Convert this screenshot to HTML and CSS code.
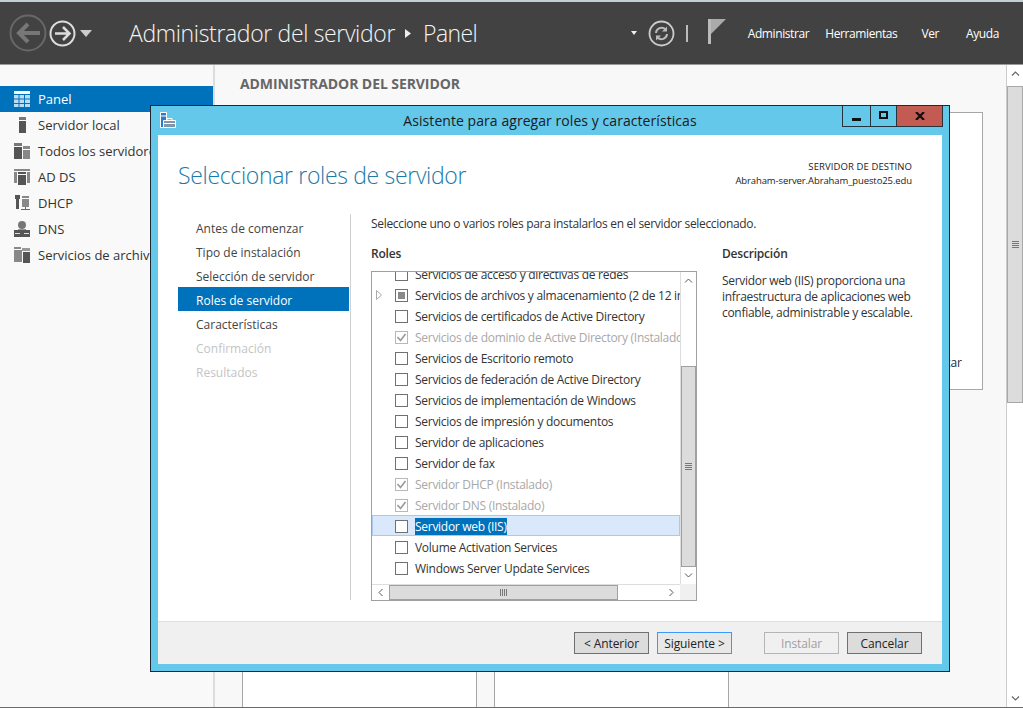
FILE: index.html
```html
<!DOCTYPE html>
<html lang="es">
<head>
<meta charset="utf-8">
<title>Administrador del servidor</title>
<link rel="stylesheet" href="styles.css">
</head>
<body>
<div class="app">
  <header class="topbar">
    <div class="nav">
      <svg class="back" width="38" height="38" viewBox="0 0 38 38"><circle cx="19" cy="19" r="17.500" fill="none" stroke="#686868" stroke-width="2"/><path d="M31 19H10M19 10l-9 9 9 9" fill="none" stroke="#777" stroke-width="4"/></svg>
      <svg class="forward" width="27" height="27" viewBox="0 0 27 27"><circle cx="13.500" cy="13.500" r="12" fill="none" stroke="#ddd" stroke-width="2"/><path d="M6 13.500h14M14 7l6.500 6.500L14 20" fill="none" stroke="#ddd" stroke-width="2.500"/></svg>
      <svg class="caret" width="12" height="7" viewBox="0 0 12 7"><path d="M0 0h12L6 7z" fill="#ccc"/></svg>
    </div>
    <div class="crumb"><span>Administrador del servidor</span><svg width="6" height="9" viewBox="0 0 6 9"><path d="M0 0l6 4.500L0 9z" fill="#eee"/></svg><span>Panel</span></div>
    <div class="tools">
      <svg class="mini" width="6" height="4" viewBox="0 0 6 4"><path d="M0 0h6L3 4z" fill="#eee"/></svg>
      <svg class="refresh" width="27" height="27" viewBox="0 0 27 27"><circle cx="13.500" cy="13.500" r="12" fill="none" stroke="#ccc" stroke-width="1.800"/><path d="M8 13a5.500 5.500 0 0 1 9.500-3.500M19 14a5.500 5.500 0 0 1-9.500 3.500" fill="none" stroke="#bbb" stroke-width="2"/><path d="M19 6.500v5h-5zM8 20.500v-5h5z" fill="#bbb"/></svg>
      <i class="sep"></i>
      <svg class="flag" width="18" height="25" viewBox="0 0 18 25"><path d="M0 0h3v25H0z" fill="#bbb"/><path d="M3 0h15L3 15z" fill="#aaa"/></svg>
      <nav class="menu"><span class="m1">Administrar</span><span class="m2">Herramientas</span><span class="m3">Ver</span><span class="m4">Ayuda</span></nav>
    </div>
  </header>
  <div class="workspace">
    <aside class="sidebar">
      <div class="item active"><svg class="ic" width="16" height="16" viewBox="0 0 16 16"><path d="M0 0h16v3H0z" fill="#fff"/><path d="M0 4h4.500v3.500H0zM5.500 4H10v3.500H5.500zM11 4h5v3.500h-5zM0 8.500h4.500V12H0zM5.500 8.500H10V12H5.500zM11 8.500h5V12h-5zM0 13h4.500v3H0zM5.500 13H10v3H5.500zM11 13h5v3h-5z" fill="#bcdcf2"/></svg>Panel</div>
      <div class="item"><svg class="ic" width="16" height="16" viewBox="0 0 16 16"><path d="M5 0h7v3H5z" fill="#777"/><path d="M5 4h7v12H5z" fill="#555"/></svg>Servidor local</div>
      <div class="item"><svg class="ic" width="16" height="16" viewBox="0 0 16 16"><path d="M0 0h8v3H0z" fill="#777"/><path d="M0 4h8v12H0z" fill="#555"/><path d="M9 3h7v3H9zM9 7h7v9H9z" fill="#888"/></svg>Todos los servidores</div>
      <div class="item"><svg class="ic" width="16" height="16" viewBox="0 0 16 16"><path d="M0 0h16v2H0zM0 3h3v11H0zM13 3h3v11h-3z" fill="#888"/><path d="M4 3h8v2H4zM4 6h8v10H4z" fill="#555"/></svg>AD DS</div>
      <div class="item"><svg class="ic" width="16" height="16" viewBox="0 0 16 16"><path d="M1 0h5v4H5v10H2V4H1z" fill="#555"/><path d="M8 1h7v2H8zM8 4h7v8H8z" fill="#888"/><path d="M11 12h1v2h4v1H7v-1h4z" fill="#666"/></svg>DHCP</div>
      <div class="item"><svg class="ic" width="16" height="16" viewBox="0 0 16 16"><circle cx="8" cy="4" r="4" fill="#777"/><path d="M4 8h8v1H4z" fill="#999"/><path d="M0 9h16v7H0z" fill="#555"/><path d="M1 12h5v1H1zM10 12h5v1h-5z" fill="#ddd"/></svg>DNS</div>
      <div class="item"><svg class="ic" width="16" height="16" viewBox="0 0 16 16"><path d="M0 0h7v2H0zM0 3h8v12H0z" fill="#888"/><path d="M8 1h8v3H8z" fill="#999"/><path d="M9 5h7v11H9z" fill="#555"/></svg>Servicios de archivos</div>
    </aside>
    <main class="content">
      <h2 class="page-title">ADMINISTRADOR DEL SERVIDOR</h2>
      <div class="tile"><span class="tile-text">Ocultar</span></div>
      <div class="lower"><div class="lower-box"></div><div class="lower-box"></div></div>
    </main>
    <div class="page-scroll">
      <div class="sb-btn"><svg width="9" height="5" viewBox="0 0 9 5"><path d="M1 4.500l3.500-3.500 3.500 3.500" fill="none" stroke="#666" stroke-width="1.200"/></svg></div>
      <div class="page-thumb"><i class="grip"></i></div>
      <div class="page-track"></div>
      <div class="sb-btn"><svg width="9" height="5" viewBox="0 0 9 5"><path d="M1 .500L4.500 4 8 .500" fill="none" stroke="#666" stroke-width="1.200"/></svg></div>
    </div>
  </div>
</div>

<section class="wizard">
  <div class="titlebar">
    <svg class="w-ic" width="16" height="16" viewBox="0 0 16 16"><path d="M.5.500h6v15h-6z" fill="#2a7cc7" stroke="#fff"/><path d="M1 4h5" stroke="#fff"/><path d="M3.500 8.500h12v7h-12z" fill="#7d97ad" stroke="#fff"/><path d="M7 8V6.500h5V8M4 11.500h11" fill="none" stroke="#fff"/></svg>
    <div class="w-title">Asistente para agregar roles y características</div>
    <div class="w-controls">
      <button class="wb wb-min"><i></i></button>
      <button class="wb wb-max"><i></i></button>
      <button class="wb wb-close"><svg width="10" height="8" viewBox="0 0 10 8"><path d="M1 0l4 4 4-4M1 8l4-4 4 4" fill="none" stroke="#111" stroke-width="2.200"/></svg></button>
    </div>
  </div>
  <div class="w-body">
    <div class="w-head">
      <h1>Seleccionar roles de servidor</h1>
      <div class="dest"><div class="dest-a">SERVIDOR DE DESTINO</div><div class="dest-b">Abraham-server.Abraham_puesto25.edu</div></div>
    </div>
    <div class="w-main">
      <ul class="steps">
        <li>Antes de comenzar</li>
        <li>Tipo de instalación</li>
        <li>Selección de servidor</li>
        <li class="cur">Roles de servidor</li>
        <li>Características</li>
        <li class="off">Confirmación</li>
        <li class="off">Resultados</li>
      </ul>
      <div class="pane">
        <p class="lead">Seleccione uno o varios roles para instalarlos en el servidor seleccionado.</p>
        <div class="cols">
          <div class="roles">
            <h3>Roles</h3>
            <div class="listbox">
              <div class="rows">
                <div class="row"><b class="cb"></b><span>Servicios de acceso y directivas de redes</span></div>
                <div class="row"><svg class="exp" width="6" height="10" viewBox="0 0 6 10"><path d="M.5.500l5 4.500-5 4.500z" fill="none" stroke="#aaa"/></svg><b class="cb part"></b><span>Servicios de archivos y almacenamiento (2 de 12 instalados)</span></div>
                <div class="row"><b class="cb"></b><span>Servicios de certificados de Active Directory</span></div>
                <div class="row dis"><b class="cb"><svg width="11" height="9" viewBox="0 0 11 9"><path d="M1.500 4l3 3.500 5-6.500" fill="none" stroke="#999" stroke-width="1.600"/></svg></b><span>Servicios de dominio de Active Directory (Instalado)</span></div>
                <div class="row"><b class="cb"></b><span>Servicios de Escritorio remoto</span></div>
                <div class="row"><b class="cb"></b><span>Servicios de federación de Active Directory</span></div>
                <div class="row"><b class="cb"></b><span>Servicios de implementación de Windows</span></div>
                <div class="row"><b class="cb"></b><span>Servicios de impresión y documentos</span></div>
                <div class="row"><b class="cb"></b><span>Servidor de aplicaciones</span></div>
                <div class="row"><b class="cb"></b><span>Servidor de fax</span></div>
                <div class="row dis"><b class="cb"><svg width="11" height="9" viewBox="0 0 11 9"><path d="M1.500 4l3 3.500 5-6.500" fill="none" stroke="#999" stroke-width="1.600"/></svg></b><span>Servidor DHCP (Instalado)</span></div>
                <div class="row dis"><b class="cb"><svg width="11" height="9" viewBox="0 0 11 9"><path d="M1.500 4l3 3.500 5-6.500" fill="none" stroke="#999" stroke-width="1.600"/></svg></b><span>Servidor DNS (Instalado)</span></div>
                <div class="row sel"><b class="cb"></b><span>Servidor web (IIS)</span></div>
                <div class="row"><b class="cb"></b><span>Volume Activation Services</span></div>
                <div class="row"><b class="cb"></b><span>Windows Server Update Services</span></div>
              </div>
              <div class="vbar">
                <div class="lb-btn"><svg width="9" height="5" viewBox="0 0 9 5"><path d="M1 4.500l3.500-3.500 3.500 3.500" fill="none" stroke="#555"/></svg></div>
                <div class="v-track"></div>
                <div class="v-thumb"><i class="grip"></i></div>
                <div class="lb-btn"><svg width="9" height="5" viewBox="0 0 9 5"><path d="M1 .500L4.500 4 8 .500" fill="none" stroke="#555"/></svg></div>
              </div>
              <div class="hbar">
                <div class="lh-btn"><svg width="5" height="9" viewBox="0 0 5 9"><path d="M4.500 1L1 4.500 4.500 8" fill="none" stroke="#555"/></svg></div>
                <div class="h-thumb"><i class="hgrip"></i></div>
                <div class="h-track"></div>
                <div class="lh-btn"><svg width="5" height="9" viewBox="0 0 5 9"><path d="M.500 1L4 4.500.500 8" fill="none" stroke="#555"/></svg></div>
              </div>
              <div class="corner"></div>
            </div>
          </div>
          <div class="desc">
            <h3>Descripción</h3>
            <p>Servidor web (IIS) proporciona una infraestructura de aplicaciones web confiable, administrable y escalable.</p>
          </div>
        </div>
      </div>
    </div>
    <div class="w-foot">
      <button class="btn">&lt; Anterior</button>
      <button class="btn focus">Siguiente &gt;</button>
      <button class="btn disabled">Instalar</button>
      <button class="btn">Cancelar</button>
    </div>
  </div>
</section>
</body>
</html>
```

FILE: styles.css
```css
* { box-sizing: border-box; }
html, body { margin: 0; padding: 0; height: 100%; overflow: hidden; }
body { font-family: "Open Sans", "Noto Sans", sans-serif; font-size: 12px; color: #2b2b2b; background: #f9f9f9; }
ul, p, h1, h2, h3 { margin: 0; padding: 0; }
.app { width: 1023px; height: 708px; display: flex; flex-direction: column; border-top: 2px solid #c2d0d6; border-bottom: 1px solid #6b6b6b; }

.topbar { height: 63px; flex: none; background: #424242; border-bottom: 1px solid #9a9a9a; display: flex; align-items: center; color: #fff; }
.nav { display: flex; align-items: center; width: 129px; padding-left: 9px; }
.forward { margin-left: 2px; }
.caret { margin-left: 4px; }
.crumb { display: flex; align-items: center; font-size: 23px; font-weight: 300; letter-spacing: -.35px; color: #f4f4f4; flex: 1; }
.crumb svg { margin: 0 12px 0 10px; }
.crumb span:last-child { letter-spacing: -.6px; }
.tools { display: flex; align-items: center; padding-right: 24px; }
.mini { margin-right: 11px; }
.sep { width: 2px; height: 17px; background: #bbb; margin: 0 20px 0 11px; }
.flag { margin-right: 22px; margin-top: -3px; }
.menu { display: flex; font-size: 12px; letter-spacing: -.4px; }
.m2 { margin-left: 16px; }
.m3 { margin-left: 24px; }
.m4 { margin-left: 27px; }

.workspace { flex: 1; min-height: 0; display: flex; }
.sidebar { width: 215px; flex: none; background: #f9f9f9; border-right: 2px solid #dcdcdc; padding-top: 21px; overflow: hidden; }
.item { height: 26px; display: flex; align-items: center; padding-left: 14px; font-size: 13px; white-space: nowrap; color: #333; }
.item .ic { margin-right: 8px; flex: none; }
.item.active { background: #0072bc; color: #fff; }

.content { flex: 1; min-width: 0; position: relative; background: #f8f8f8; padding: 9px 0 0 25px; display: flex; flex-direction: column; }
.page-title { font-size: 14px; font-weight: 700; color: #666; line-height: 20px; letter-spacing: -.08px; }
.tile { position: absolute; left: 650px; top: 47px; width: 118px; height: 278px; background: #fff; border: 1px solid #a6a6a6; }
.tile-text { position: absolute; right: 20px; top: 242px; line-height: 16px; }
.lower { position: absolute; left: 27px; top: 560px; bottom: 0; display: flex; gap: 17px; }
.lower-box { width: 235px; background: #fff; border: 1px solid #a6a6a6; border-bottom: 0; }

.page-scroll { width: 17px; flex: none; background: #fff; border-left: 1px solid #ccc; display: flex; flex-direction: column; }
.sb-btn { height: 17px; flex: none; display: flex; align-items: center; justify-content: center; background: #fff; }
.page-thumb { margin-top: 4px; height: 317px; flex: none; background: #dcdcdc; border: 1px solid #a8a8a8; display: flex; align-items: center; justify-content: center; }
.page-track { flex: 1; }
.grip { display: block; width: 7px; height: 7px; background: repeating-linear-gradient(#777 0 1px, transparent 1px 2px); }

.wizard { position: absolute; left: 150px; top: 105px; width: 800px; height: 567px; background: #64c8ea; border: 1px solid #1e2a33; display: flex; flex-direction: column; padding: 0 7px 7px; }
.titlebar { height: 29px; flex: none; position: relative; display: flex; align-items: center; justify-content: center; }
.w-ic { position: absolute; left: 2px; top: 6px; }
.w-title { font-size: 14px; color: #1a1a1a; letter-spacing: .06px; }
.w-controls { position: absolute; right: -1px; top: 0; display: flex; height: 21px; }
.wb { border: 1px solid #25333d; border-top: 0; background: #64c8ea; margin: 0 0 0 -1px; padding: 0; display: flex; align-items: center; justify-content: center; }
.wb-min { width: 29px; }
.wb-min i { display: block; width: 9px; height: 3px; background: #111; margin-top: 6px; }
.wb-max { width: 27px; }
.wb-max i { display: block; width: 9px; height: 8px; border: 2px solid #111; margin-top: -2px; }
.wb-close { width: 47px; background: #c25b52; }

.w-body { flex: 1; min-height: 0; background: #fff; display: flex; flex-direction: column; }
.w-head { height: 79px; flex: none; position: relative; padding: 25px 0 0 20px; }
.w-head h1 { font-size: 23px; font-weight: 300; color: #1a7aa8; line-height: 30px; letter-spacing: -.33px; }
.dest { position: absolute; right: 30px; top: 25px; text-align: right; font-size: 9.500px; line-height: 14px; color: #222; }
.dest-a { letter-spacing: .1px; }
.dest-b { letter-spacing: -.1px; }
.w-main { flex: 1; min-height: 0; display: flex; padding-left: 20px; }
.steps { list-style: none; width: 171px; flex: none; padding-top: 1px; }
.steps li { height: 24px; line-height: 27px; padding-left: 18px; color: #444; }
.steps li.cur { background: #0072bc; color: #fff; }
.steps li.off { color: #c4c4c4; }
.pane { flex: 1; min-width: 0; position: relative; padding: 1px 0 0 22px; }
.pane::before { content: ""; position: absolute; left: 1px; top: 0; width: 1px; height: 386px; background: #d0d0d0; }
.lead { line-height: 18px; color: #333; letter-spacing: -.32px; }
.cols { display: flex; margin-top: 12px; }
.roles { width: 326px; flex: none; }
h3 { font-size: 12px; font-weight: 600; line-height: 18px; color: #333; letter-spacing: -.2px; }
.listbox { margin-top: 8px; width: 326px; height: 330px; border: 1px solid #a0a0a0; display: grid; grid-template-columns: 1fr 16px; grid-template-rows: 1fr 16px; overflow: hidden; background: #fff; }
.rows { overflow: hidden; min-width: 0; margin-top: -9px; }
.row { height: 21px; display: flex; align-items: center; position: relative; padding: 1px 0 0 23px; white-space: nowrap; color: #333; letter-spacing: -.28px; }
.row .exp { position: absolute; left: 4px; top: 6px; }
.row.dis { color: #a8a8a8; }
.cb { display: flex; align-items: center; justify-content: center; width: 13px; height: 13px; flex: none; border: 1px solid #707070; background: #fff; margin-right: 7px; }
.dis .cb { border-color: #b8b8b8; }
.cb.part { background: #fff; position: relative; }
.cb.part::after { content: ""; width: 7px; height: 7px; background: #8a8a8a; }
.row.sel { background: #d9e9fb; box-shadow: inset 0 0 0 1px #a8caf0; color: #fff; }
.row.sel span { background: #0072bc; }
.vbar { grid-column: 2; grid-row: 1; display: flex; flex-direction: column; background: #fff; border-left: 1px solid #ddd; min-height: 0; }
.lb-btn { height: 17px; flex: none; display: flex; align-items: center; justify-content: center; }
.v-track { height: 77px; flex: none; }
.v-thumb { flex: 1; background: #dcdcdc; border: 1px solid #a0a0a0; display: flex; align-items: center; justify-content: center; }
.hbar { grid-column: 1; grid-row: 2; display: flex; background: #fff; border-top: 1px solid #ddd; }
.lh-btn { width: 17px; flex: none; display: flex; align-items: center; justify-content: center; }
.h-thumb { width: 229px; flex: none; background: #dcdcdc; border: 1px solid #a0a0a0; display: flex; align-items: center; justify-content: center; }
.hgrip { display: block; width: 7px; height: 7px; background: repeating-linear-gradient(90deg, #777 0 1px, transparent 1px 2px); }
.h-track { flex: 1; }
.corner { grid-column: 2; grid-row: 2; background: #f0f0f0; }
.desc { margin-left: 25px; flex: 1; min-width: 0; padding-right: 24px; }
.desc p { margin-top: 10px; line-height: 16px; color: #333; letter-spacing: -.3px; }

.w-foot { height: 43px; flex: none; background: #f0f0f0; border-top: 1px solid #dfdfdf; display: flex; align-items: center; padding-left: 416px; }
.btn { width: 75px; height: 22px; font: inherit; letter-spacing: -.1px; color: #222; padding: 0; background: #dcdcdc; border: 1px solid #707070; margin-right: 8px; }
.btn.focus { background: #e8e8e8; border-color: #3b99fc; margin-right: 32px; }
.btn.disabled { background: #f0f0f0; border-color: #b5b5b5; color: #a0a0a0; }
```
